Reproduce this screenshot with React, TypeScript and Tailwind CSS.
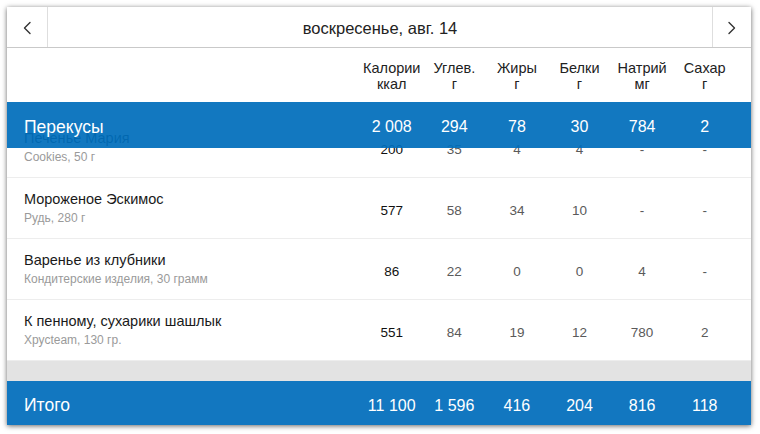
import React from "react";

type Row = { title: string; sub: string; vals: string[] };

const rows: Row[] = [
  { title: "Печенье Мария", sub: "Cookies, 50 г", vals: ["200", "35", "4", "4", "-", "-"] },
  { title: "Мороженое Эскимос", sub: "Рудь, 280 г", vals: ["577", "58", "34", "10", "-", "-"] },
  { title: "Варенье из клубники", sub: "Кондитерские изделия, 30 грамм", vals: ["86", "22", "0", "0", "4", "-"] },
  { title: "К пенному, сухарики шашлык", sub: "Хрусteam, 130 гр.", vals: ["551", "84", "19", "12", "780", "2"] },
];

const headers: [string, string][] = [
  ["Калории", "ккал"],
  ["Углев.", "г"],
  ["Жиры", "г"],
  ["Белки", "г"],
  ["Натрий", "мг"],
  ["Сахар", "г"],
];

const snack = ["2 008", "294", "78", "30", "784", "2"];
const total = ["11 100", "1 596", "416", "204", "816", "118"];

function Chevron({ dir }: { dir: "left" | "right" }) {
  return (
    <svg width="10" height="14" viewBox="0 0 10 14" fill="none">
      <polyline
        points={dir === "left" ? "8,1.5 2.5,7 8,12.5" : "2,1.5 7.5,7 2,12.5"}
        stroke="#333"
        strokeWidth="1.4"
        strokeLinecap="round"
        strokeLinejoin="round"
      />
    </svg>
  );
}

export default function App() {
  return (
    <div className="min-h-screen bg-white pt-[7px] pl-[7px] font-['Liberation_Sans',Arial,sans-serif]">
      <div className="w-[744px] h-[418px] bg-white shadow-[0_1px_5px_rgba(0,0,0,0.6)] flex flex-col overflow-hidden">
        {/* nav bar */}
        <div className="h-[41px] shrink-0 flex border-b border-[#c9c9c9]">
          <div className="w-[41px] border-r border-[#dedede] flex items-center justify-center pt-[2px]">
            <Chevron dir="left" />
          </div>
          <div className="flex-1 flex items-center justify-center pt-[3px] text-[16.5px] text-[#222]">
            воскресенье, авг. 14
          </div>
          <div className="w-[39px] border-l border-[#dedede] flex items-center justify-center pt-[2px]">
            <Chevron dir="right" />
          </div>
        </div>

        {/* column headers */}
        <div className="h-[54px] shrink-0 flex items-center pt-[2px]">
          <div className="ml-auto pr-[15px] flex">
            {headers.map(([a, b]) => (
              <div key={a} className="w-[62.6px] text-center text-[14.5px] leading-[16px] text-[#222]">
                <div>{a}</div>
                <div>{b}</div>
              </div>
            ))}
          </div>
        </div>

        {/* section bar */}
        <div className="h-[46px] shrink-0 relative z-10 flex items-center pl-[17px] pt-[4px] bg-[rgba(0,110,187,0.93)] text-white">
          <div className="text-[17.5px]">Перекусы</div>
          <div className="ml-auto pr-[15px] flex">
            {snack.map((v, i) => (
              <div key={i} className="w-[62.6px] text-center text-[16px]">
                {v}
              </div>
            ))}
          </div>
        </div>

        {/* rows (scrolled) */}
        <div className="mt-[-31px] shrink-0">
          {rows.map((r) => (
            <div key={r.title} className="h-[61px] flex border-b border-[#ededed] pl-[17px]">
              <div className="pt-[12px]">
                <div className="text-[14.5px] leading-[18px] text-[#1a1a1a]">{r.title}</div>
                <div className="mt-[2px] text-[12px] leading-[16px] text-[#9a9a9a]">{r.sub}</div>
              </div>
              <div className="ml-auto pr-[15px] flex">
                {r.vals.map((v, i) => (
                  <div
                    key={i}
                    className={
                      i === 0
                        ? "w-[62.6px] pt-[25px] text-center text-[13.5px] leading-[16px] text-[#111]"
                        : "w-[62.6px] pt-[25px] text-center text-[13.5px] leading-[16px] text-[#5a5a5a]"
                    }
                  >
                    {v}
                  </div>
                ))}
              </div>
            </div>
          ))}
        </div>

        {/* gray spacer */}
        <div className="h-[20px] shrink-0 bg-[#e3e3e3]" />

        {/* totals */}
        <div className="h-[44px] shrink-0 flex items-center pl-[17px] pt-[5px] bg-[#1277c0] text-white">
          <div className="text-[17.5px]">Итого</div>
          <div className="ml-auto pr-[15px] flex">
            {total.map((v, i) => (
              <div key={i} className="w-[62.6px] text-center text-[16px]">
                {v}
              </div>
            ))}
          </div>
        </div>
      </div>
    </div>
  );
}
